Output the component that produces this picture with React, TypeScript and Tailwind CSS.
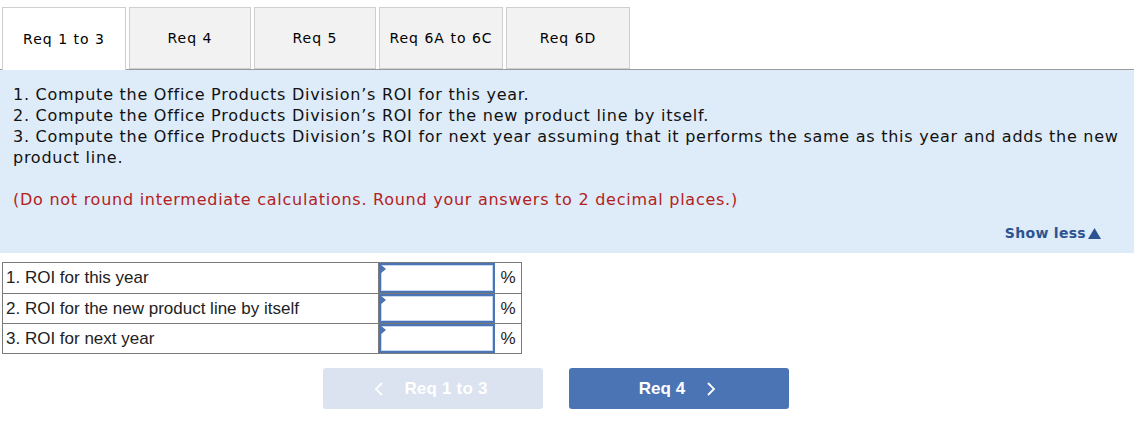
import React from "react"

const tabs = [
  { label: "Req 1 to 3", w: "w-[124px]" },
  { label: "Req 4", w: "w-[122px]" },
  { label: "Req 5", w: "w-[122px]" },
  { label: "Req 6A to 6C", w: "w-[124px]" },
  { label: "Req 6D", w: "w-[124px]" },
]

const rows = ["1. ROI for this year", "2. ROI for the new product line by itself", "3. ROI for next year"]

export default function App() {
  return (
    <div className="w-[1148px] h-[424px] bg-white relative" style={{ fontFamily: '"DejaVu Sans", Verdana, sans-serif' }}>
      {/* tabs */}
      <div className="flex gap-[3px] pl-[2px] pt-[7px] h-[70px]">
        {tabs.map((t, i) => (
          <div
            key={t.label}
            className={`${t.w} flex items-center justify-center text-[14px] tracking-[1px] text-black border border-[#cfcfcf] ${
              i === 0 ? "bg-white border-b-0 border-[#bdbdbd] relative z-10 h-[63px]" : "bg-[#f2f2f2] h-[62px]"
            }`}
          >
            {t.label}
          </div>
        ))}
      </div>

      {/* instructions panel */}
      <div className="w-[1134px] bg-[#deebf8] border-t border-[#9a9a9a] -mt-px pt-[14px] pb-[9px] pl-[13px] pr-[8px] text-[16px] tracking-[0.74px] leading-[21px] text-[#111]">
        <p>1. Compute the Office Products Division’s ROI for this year.</p>
        <p>2. Compute the Office Products Division’s ROI for the new product line by itself.</p>
        <p>
          3. Compute the Office Products Division’s ROI for next year assuming that it performs the same as this year and adds the new
          product line.
        </p>
        <p className="mt-[21px] text-[#b22222]">(Do not round intermediate calculations. Round your answers to 2 decimal places.)</p>
        <div className="flex justify-end mt-[13px] pr-[25px]">
          <span className="text-[14px] tracking-[0.3px] font-bold text-[#2c5390] flex items-center gap-[2px]">
            Show less
            <svg width="13" height="11" viewBox="0 0 13 11">
              <path d="M6.5 0 L13 11 L0 11 Z" fill="#2c5390" />
            </svg>
          </span>
        </div>
      </div>

      {/* answer table */}
      <div className="mt-[9px] ml-[2px] w-[520px] border border-[#7a7a7a]" style={{ fontFamily: '"Liberation Sans", Arial, sans-serif' }}>
        {rows.map((r, i) => (
          <div key={r} className={`flex h-[30px] ${i > 0 ? "border-t border-[#7a7a7a]" : ""}`}>
            <div className="w-[376px] border-r border-[#7a7a7a] flex items-center pl-[3px] text-[17px] text-[#222]">{r}</div>
            <div className="w-[116px] relative border-2 border-[#4a74b4] bg-white">
              <div className="absolute inset-0 border border-[#c9d8ee]" />
              <div className="absolute -top-px -left-px w-0 h-0 border-t-[5px] border-b-[5px] border-l-[6px] border-t-transparent border-b-transparent border-l-[#4a74b4]" />
            </div>
            <div className="flex-1 flex items-center justify-center text-[17px] text-[#222]">%</div>
          </div>
        ))}
      </div>

      {/* navigation buttons */}
      <div className="flex gap-[26px] ml-[323px] mt-[14px]" style={{ fontFamily: '"Liberation Sans", Arial, sans-serif' }}>
        <div className="w-[220px] h-[41px] rounded-[3px] bg-[#dae3ef] flex items-center justify-center gap-[20px] text-white font-bold text-[17px] pr-[4px]">
          <svg width="10" height="14" viewBox="0 0 10 14" fill="none" stroke="white" strokeWidth="1.8">
            <path d="M8 1 L2 7 L8 13" />
          </svg>
          <span className="tracking-[0.2px]">Req 1 to 3</span>
        </div>
        <div className="w-[220px] h-[41px] rounded-[3px] bg-[#4a74b4] flex items-center justify-center gap-[21px] text-white font-bold text-[17px] pr-[3px]">
          <span>Req 4</span>
          <svg width="10" height="14" viewBox="0 0 10 14" fill="none" stroke="white" strokeWidth="1.8">
            <path d="M2 1 L8 7 L2 13" />
          </svg>
        </div>
      </div>
    </div>
  )
}
